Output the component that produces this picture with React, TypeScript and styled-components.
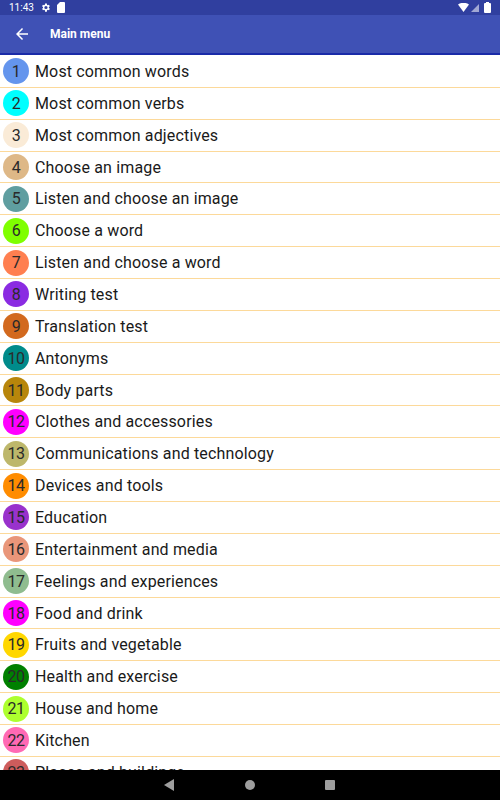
import React from "react";
import styled, { createGlobalStyle } from "styled-components";

const Global = createGlobalStyle`
  html, body { margin: 0; padding: 0; background: #fff; }
  body { font-family: Roboto, "Noto Sans", sans-serif; }
  #root { width: 500px; height: 800px; }
`;

const Screen = styled.div`
  width: 500px;
  height: 800px;
  display: flex;
  flex-direction: column;
  overflow: hidden;
  background: #fff;
`;

const StatusBar = styled.div`
  height: 15px;
  flex: 0 0 15px;
  background: #303f9f;
  display: flex;
  align-items: center;
  justify-content: space-between;
  padding: 0 9px;
  color: #fff;
  font-size: 10px;
`;

const StatusLeft = styled.div`
  display: flex;
  align-items: center;
  gap: 6px;
`;

const StatusRight = styled.div`
  display: flex;
  align-items: center;
  gap: 2px;
`;

const AppBar = styled.div`
  height: 38px;
  flex: 0 0 38px;
  background: #3f51b5;
  border-bottom: 2px solid #1a2ba8;
  display: flex;
  align-items: center;
  padding-left: 13px;
  color: #fff;
`;

const Title = styled.div`
  margin-left: 19px;
  font-size: 12px;
  font-weight: 700;
`;

const List = styled.div`
  flex: 1;
  overflow: hidden;
  padding-top: 1px;
`;

const Row = styled.div`
  height: 31.86px;
  box-sizing: border-box;
  border-bottom: 1px solid #fcd99a;
  display: flex;
  align-items: center;
  padding-left: 3px;
`;

const Badge = styled.div<{ $bg: string }>`
  width: 26px;
  height: 26px;
  border-radius: 50%;
  background: ${(p) => p.$bg};
  display: flex;
  align-items: center;
  justify-content: center;
  font-size: 16px;
  color: #2a2a2a;
  flex: 0 0 26px;
  letter-spacing: -0.5px;
`;

const Label = styled.div`
  margin-left: 6px;
  font-size: 16px;
  letter-spacing: 0.15px;
  color: #1a1a1a;
  white-space: nowrap;
`;

const NavBar = styled.div`
  height: 30px;
  flex: 0 0 30px;
  background: #000;
  display: flex;
  align-items: center;
  justify-content: center;
  gap: 68px;
`;

const items: [string, string][] = [
  ["#6495ED", "Most common words"],
  ["#00FFFF", "Most common verbs"],
  ["#FAEBD7", "Most common adjectives"],
  ["#DEB887", "Choose an image"],
  ["#5F9EA0", "Listen and choose an image"],
  ["#7FFF00", "Choose a word"],
  ["#FF7F50", "Listen and choose a word"],
  ["#8A2BE2", "Writing test"],
  ["#D2691E", "Translation test"],
  ["#008B8B", "Antonyms"],
  ["#B8860B", "Body parts"],
  ["#FF00FF", "Clothes and accessories"],
  ["#BDB76B", "Communications and technology"],
  ["#FF8C00", "Devices and tools"],
  ["#9932CC", "Education"],
  ["#E9967A", "Entertainment and media"],
  ["#8FBC8F", "Feelings and experiences"],
  ["#FF00FF", "Food and drink"],
  ["#FFD700", "Fruits and vegetable"],
  ["#008000", "Health and exercise"],
  ["#ADFF2F", "House and home"],
  ["#FF69B4", "Kitchen"],
  ["#CD5C5C", "Places and buildings"],
];

export default function App() {
  return (
    <>
      <Global />
      <Screen>
        <StatusBar>
          <StatusLeft>
            <span>11:43</span>
            <svg width="11" height="11" viewBox="0 0 24 24" fill="#fff">
              <path d="M19.4 13a7.5 7.5 0 0 0 0-2l2.1-1.6-2-3.5-2.5 1a7.4 7.4 0 0 0-1.7-1L15 3h-4l-.4 2.9a7.4 7.4 0 0 0-1.7 1l-2.5-1-2 3.5L6.6 11a7.5 7.5 0 0 0 0 2l-2.1 1.6 2 3.5 2.5-1a7.4 7.4 0 0 0 1.7 1L11 21h4l.4-2.9a7.4 7.4 0 0 0 1.7-1l2.5 1 2-3.5zM13 15.5a3.5 3.5 0 1 1 0-7 3.5 3.5 0 0 1 0 7z" />
            </svg>
            <svg width="8" height="11" viewBox="0 0 8 11" fill="#fff">
              <path d="M3 0h4a1 1 0 0 1 1 1v9a1 1 0 0 1-1 1H1a1 1 0 0 1-1-1V3z" />
            </svg>
          </StatusLeft>
          <StatusRight>
            <svg width="11" height="9" viewBox="0 0 11 9" fill="#fff">
              <path d="M0 1.5Q5.5-2 11 1.5L5.5 9z" />
            </svg>
            <svg width="8" height="8" viewBox="0 0 8 8" fill="rgba(255,255,255,0.55)">
              <path d="M8 0V8H0z" />
            </svg>
            <svg width="7" height="11" viewBox="0 0 7 11" fill="#fff" style={{ marginLeft: 3 }}>
              <path d="M2 0h3v1h1a1 1 0 0 1 1 1v8a1 1 0 0 1-1 1H1a1 1 0 0 1-1-1V2a1 1 0 0 1 1-1h1z" />
            </svg>
          </StatusRight>
        </StatusBar>
        <AppBar>
          <svg width="18" height="18" viewBox="0 0 24 24" fill="#fff">
            <path d="M20 11H7.83l5.59-5.59L12 4l-8 8 8 8 1.41-1.41L7.83 13H20v-2z" />
          </svg>
          <Title>Main menu</Title>
        </AppBar>
        <List>
          {items.map(([c, t], i) => (
            <Row key={i}>
              <Badge $bg={c}>{i + 1}</Badge>
              <Label>{t}</Label>
            </Row>
          ))}
        </List>
        <NavBar>
          <svg width="12" height="12" viewBox="0 0 12 12" fill="#9e9e9e">
            <path d="M0 6L10 0V12z" />
          </svg>
          <svg width="12" height="12" viewBox="0 0 12 12" fill="#9e9e9e">
            <circle cx="6" cy="6" r="5" />
          </svg>
          <svg width="12" height="12" viewBox="0 0 12 12" fill="#9e9e9e">
            <rect x="1" y="1" width="10" height="10" rx="1" />
          </svg>
        </NavBar>
      </Screen>
    </>
  );
}
